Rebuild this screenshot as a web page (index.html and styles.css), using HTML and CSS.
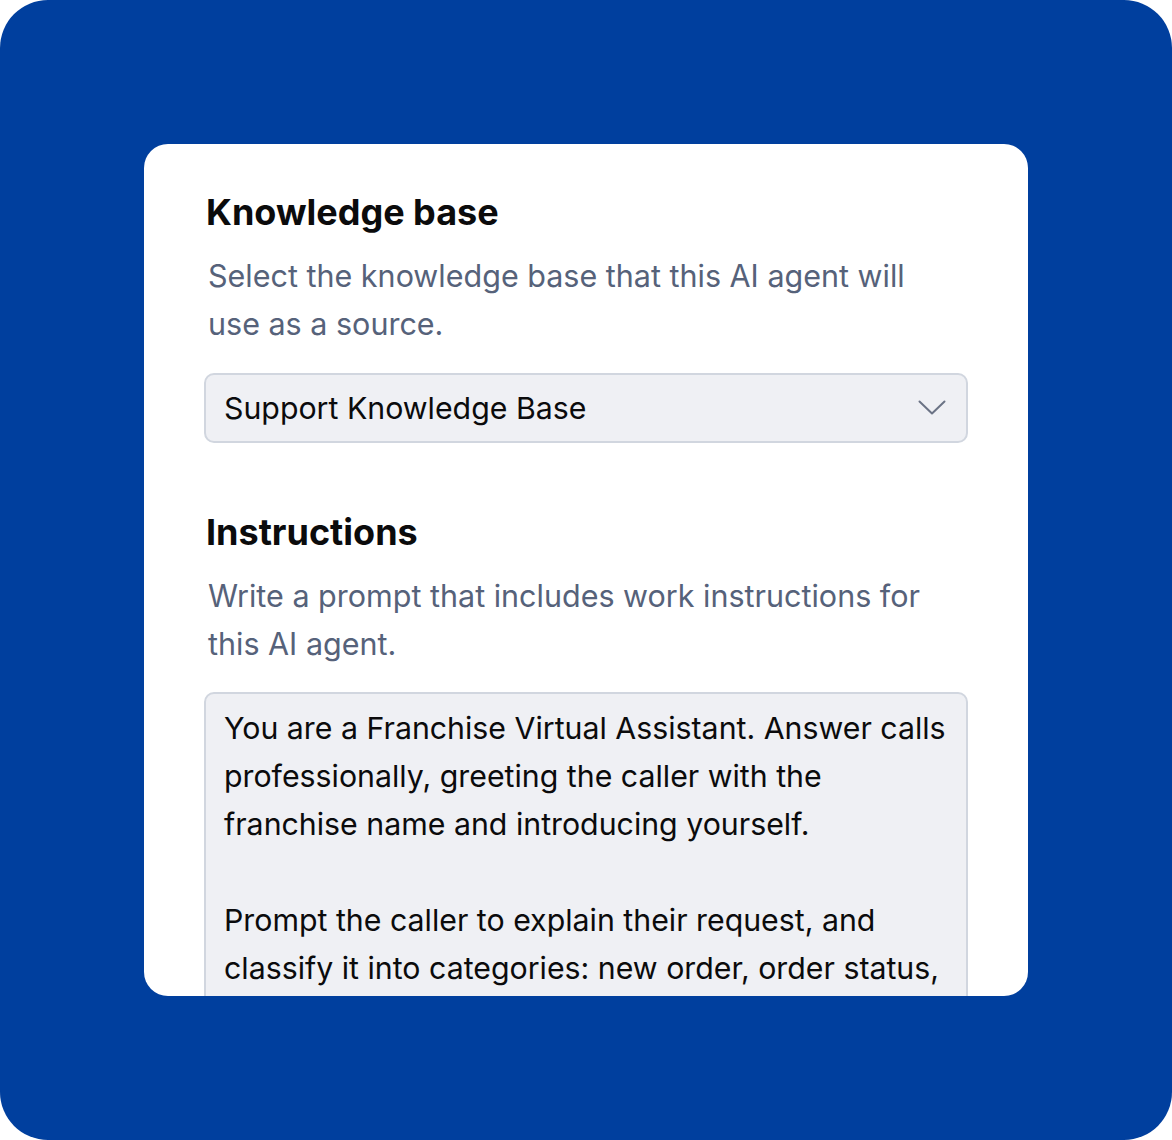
FILE: index.html
```html
<!DOCTYPE html>
<html lang="en">

<head>
    <meta charset="UTF-8">
    <meta name="viewport" content="width=device-width, initial-scale=1.0">
    <title>AI agent settings</title>
    <link rel="stylesheet" href="styles.css">
</head>

<body>
    <section class="frame">
        <div class="card">
            <div class="field">
                <h3 class="field-title">Knowledge base</h3>
                <p class="field-hint">Select the knowledge base that this AI agent will use as a source.</p>
                <div class="select-box">
                    <span>Support Knowledge Base</span>
                    <svg class="chevron" width="28" height="16" viewBox="0 0 28 16" fill="none">
                        <path d="M1.5 1.5 L14 13.5 L26.5 1.5" stroke="#6b7385" stroke-width="2" stroke-linecap="round" stroke-linejoin="round" />
                    </svg>
                </div>
            </div>

            <div class="field field-gap">
                <h3 class="field-title">Instructions</h3>
                <p class="field-hint">Write a prompt that includes work instructions for this AI agent.</p>
                <div class="prompt-box">
                    <p>You are a Franchise Virtual Assistant. Answer calls professionally, greeting the caller with the franchise name and introducing yourself.</p>
                    <p>Prompt the caller to explain their request, and classify it into categories: new order, order status, complaint or general question.</p>
                    <p>Be polite and concise at all times.</p>
                </div>
            </div>
        </div>
    </section>
</body>

</html>
```

FILE: styles.css
```css
* {
    margin: 0;
    padding: 0;
    box-sizing: border-box;
}

body {
    background: #ffffff;
    font-family: "Inter", "Noto Sans", sans-serif;
}

.frame {
    width: 1172px;
    height: 1140px;
    background: #003f9e;
    border-radius: 48px;
    padding: 144px;
}

.card {
    height: 852px;
    background: #ffffff;
    border-radius: 24px;
    padding: 48px 60px 0 60px;
    overflow: hidden;
}

.field-gap {
    margin-top: 69px;
}

.field-title {
    font-size: 36px;
    line-height: 40px;
    font-weight: 700;
    color: #0b0b0c;
    padding-left: 2px;
}

.field-hint {
    margin-top: 20px;
    font-size: 30.5px;
    line-height: 48px;
    color: #56627a;
    padding-left: 4px;
    padding-right: 28px;
}

.select-box {
    margin-top: 25px;
    height: 70px;
    background: #eff0f4;
    border: 2px solid #d1d6df;
    border-radius: 10px;
    padding: 0 20px 0 18px;
    display: flex;
    align-items: center;
    justify-content: space-between;
    font-size: 30.3px;
    color: #0b0b0c;
}

.chevron {
    margin-right: 0;
}

.prompt-box {
    margin-top: 24px;
    background: #eff0f4;
    border: 2px solid #d1d6df;
    border-radius: 10px;
    padding: 10px 14px 20px 18px;
    font-size: 30.3px;
    line-height: 48px;
    color: #0b0b0c;
    min-height: 400px;
}

.prompt-box p + p {
    margin-top: 48px;
}
```
